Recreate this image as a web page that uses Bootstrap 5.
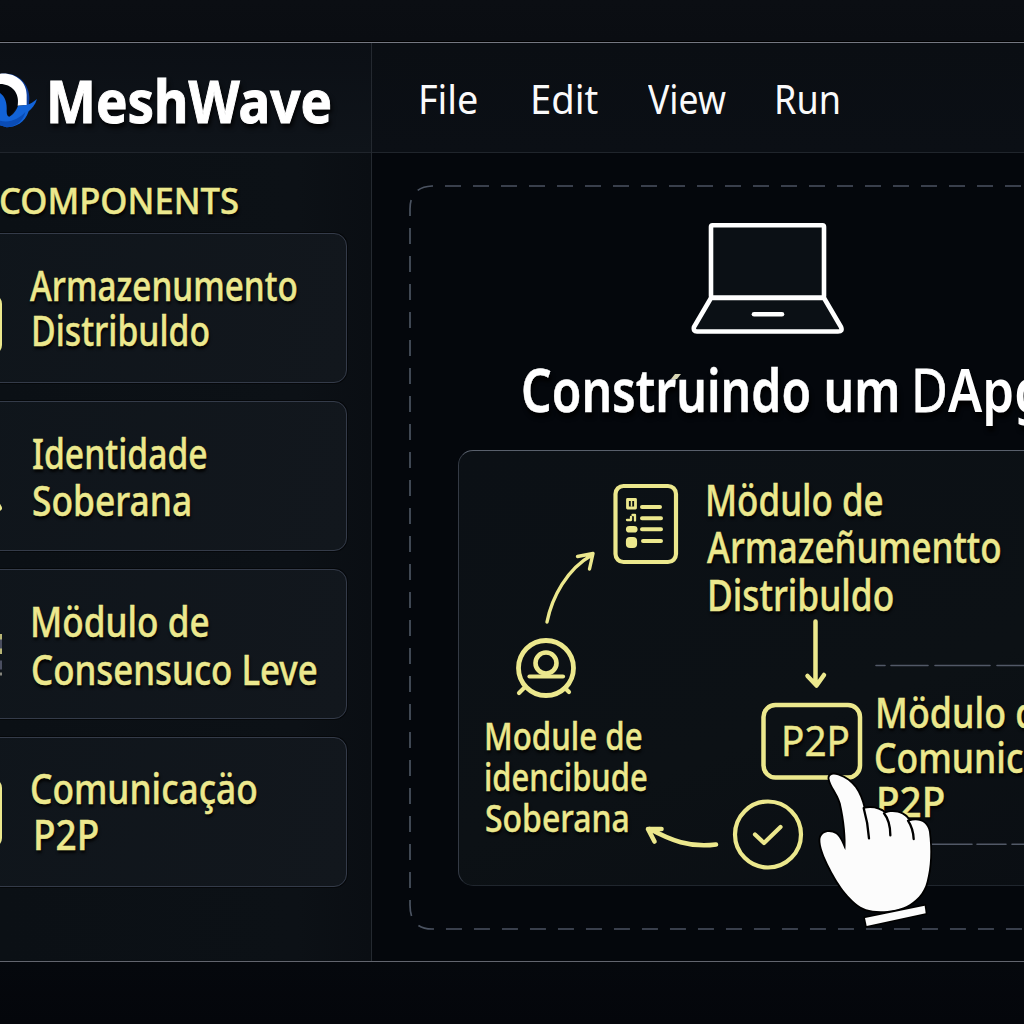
<!DOCTYPE html>
<html lang="pt" data-bs-theme="dark">
<head>
<meta charset="utf-8">
<meta name="viewport" content="width=device-width, initial-scale=1">
<title>MeshWave</title>
<link href="https://cdn.jsdelivr.net/npm/bootstrap@5.3.0/dist/css/bootstrap.min.css" rel="stylesheet">
<script src="https://cdn.jsdelivr.net/npm/bootstrap@5.3.0/dist/js/bootstrap.bundle.min.js"></script>
<style>
:root{--cream:#ece88d;--line:#343b49}
html,body{width:1024px;height:1024px;overflow:hidden}
body{background:linear-gradient(#0b0e13 0,#0a0d12 42px,#05080d 961px,#04060b 100%);font-family:"Noto Sans",sans-serif;font-weight:500;padding-top:42px}
.app-window{height:920px;border-top:1px solid #747780;border-bottom:1px solid #62656e;box-shadow:0 -1px #000;background:#04070c}
.side{width:372px;border-right:1px solid #242930;background:linear-gradient(90deg,#0b1015,#0c1116 80%,#0a0e13)}
.bar{height:110px;border-bottom:1px solid #20252c;background:linear-gradient(#0b0f15,#0f141a)}
.menu-bar{background:linear-gradient(#0a0e13,#0b0f15);padding-left:46px;padding-top:3px}
.fit{display:block;width:max-content;white-space:nowrap;transform:scaleX(var(--sx,.82));transform-origin:0 50%}
.glow{color:var(--cream);text-shadow:1px 3px 3px rgba(0,0,0,.85);-webkit-text-stroke:.45px var(--cream)}
.brand-name{font-size:60px;font-weight:700;line-height:60px;--sx:.882;margin:4px 0 0 7px;color:#fff;text-shadow:2px 4px 6px #000;-webkit-text-stroke:1px #fff}
.menu-bar .menu-item{font-size:40px;font-weight:400;line-height:54px;color:#fafafa;padding:0}
.menu-item:nth-child(1){width:112px;--sx:.945}
.menu-item:nth-child(2){width:118px;--sx:.955}
.menu-item:nth-child(3){width:126px;--sx:.89}
.menu-item:nth-child(4){--sx:.9}
.side-title{font-size:36px;font-weight:500;line-height:48px;margin:24px 0 8px -1px;--sx:.962}
.part{height:150px;width:409px;margin-left:-62px;border:1px solid var(--line);border-radius:13px;background:linear-gradient(100deg,#0f151b,#12171d);box-shadow:0 0 0 1px rgba(0,0,0,.5);padding-top:27px;font-size:42px}
.part svg{width:64px;height:100px;flex:none;margin-left:-1px}
.part .words{margin-left:28px}
#p1{line-height:44.5px;padding-top:2px}#p1 :first-child{font-size:41px;--sx:.812}#p1 :last-child{--sx:.803;margin-left:1px}
#p2{line-height:46.5px;padding-top:1px}#p2 :first-child{--sx:.802;margin-left:2px}#p2 :last-child{--sx:.842;margin-left:2px}
#p3{line-height:47.5px}#p3 :first-child{--sx:.837}#p3 :last-child{--sx:.83;margin-left:1px}
#p4{line-height:46px}#p4 :first-child{--sx:.84}#p4 :last-child{--sx:.88;margin-left:3px}
.work{padding:32px 0 0 37px}
.frame{height:744px;width:640px}
.frame-line{left:0;top:0;width:640px;height:746px}
.laptop{width:156px;height:116px;margin:36px 0 0 281px}
.title-row{font-size:60px;line-height:80px;margin:12px 0 0 112px;height:80px;color:#fff;text-shadow:2px 5px 5px #000}
.title-row .t1{font-weight:600;--sx:.802;width:390px;-webkit-text-stroke:.5px #fff}
.title-row .t2{font-weight:400;--sx:.84;width:37px;-webkit-text-stroke:.8px #fff}
.title-row .t3{font-weight:600;--sx:.85}
.accent-tick{left:262px;top:188px;width:12px;height:8px}
.flow-panel{left:49px;top:265px;width:620px;height:436px;border:1px solid #343a45;border-top-color:#59606c;border-bottom-color:#20262e;border-radius:15px;background:linear-gradient(160deg,#0b1015,#0c1115 60%,#0a0e13)}
.flow-art{left:0;top:0;width:565px;height:437px}
.label-a{left:246px;top:24.5px;font-size:43px;line-height:47.5px}
.label-a :nth-child(1){--sx:.813}.label-a :nth-child(2){--sx:.813;margin-left:2px}.label-a :nth-child(3){--sx:.82;margin-left:2px}
.label-b{left:25px;top:264px;font-size:38.5px;line-height:41px}
.label-b :nth-child(1){--sx:.812}.label-b :nth-child(2){--sx:.803}.label-b :nth-child(3){--sx:.83;margin-left:1px}
.label-c{left:416px;top:239px;font-size:42px;line-height:44.5px}
.label-c :nth-child(1){--sx:.853}.label-c :nth-child(2){--sx:.845;margin-left:-1px}.label-c :nth-child(3){--sx:.92;margin-left:1px}
.label-n{left:322px;top:266px;font-size:42px;line-height:46px;--sx:.92;font-weight:400}
.hand{left:401px;top:575px;width:140px;height:180px}
</style>
</head>
<body>
<div class="app-window d-flex overflow-hidden">
  <aside class="side d-flex flex-column flex-shrink-0 overflow-hidden">
    <div class="bar d-flex align-items-center">
      <svg width="39" height="60" viewBox="0 0 117 180"><path d="M0 18C50 10 88 45 88 92L86 118 76 116Z" fill="#0d3f9e"/><path d="M0 46C40 45 60 75 54 114L28 146H0Z" fill="#04070c"/><path d="M0 17C44 12 80 40 80 80V111L53 113C60 75 35 48 0 48Z" fill="#fff"/><path d="M0 75C15 85 22 105 20 130 20 140 23 146 28 146 40 140 50 125 54 113L80 111C92 108 100 102 111 93 106 110 96 122 86 130 75 165 45 178 20 178L0 172Z" fill="#1263d8"/><path d="M0 158C30 166 58 152 76 132 70 162 42 178 20 178L0 172Z" fill="#0a4cb5"/></svg>
      <div class="fit brand-name">MeshWave</div>
    </div>
    <h2 class="fit glow side-title">COMPONENTS</h2>
    <div class="d-flex flex-column" style="gap:18px">
      <div class="part d-flex">
        <svg viewBox="0 0 64 100"><rect x="8" y="35" width="54" height="57" rx="8" fill="none" stroke="#ece88d" stroke-width="4"/></svg>
        <div class="words glow" id="p1"><span class="fit">Armazenumento</span><span class="fit">Distribuldo</span></div>
      </div>
      <div class="part d-flex">
        <svg viewBox="0 0 64 100"><circle cx="32" cy="45" r="26" fill="none" stroke="#ece88d" stroke-width="4"/><path d="M58 74L61 79" stroke="#ece88d" stroke-width="6" stroke-linecap="round"/></svg>
        <div class="words glow" id="p2"><span class="fit">Identidade</span><span class="fit">Soberana</span></div>
      </div>
      <div class="part d-flex">
        <svg viewBox="0 0 64 100"><path d="M6 40H64M6 54H64" stroke="#b9b676" stroke-width="6"/><path d="M6 47H64M6 68H64" stroke="#4a4e60" stroke-width="9"/><path d="M6 77H64" stroke="#85857d" stroke-width="3"/></svg>
        <div class="words glow" id="p3"><span class="fit">Mödulo de</span><span class="fit">Consensuco Leve</span></div>
      </div>
      <div class="part d-flex">
        <svg viewBox="0 0 64 100"><rect x="8" y="15" width="54" height="66" rx="8" fill="none" stroke="#ece88d" stroke-width="4"/></svg>
        <div class="words glow" id="p4"><span class="fit">Comunicaçäo</span><span class="fit">P2P</span></div>
      </div>
    </div>
  </aside>
  <main class="flex-grow-1 overflow-hidden">
    <nav class="bar menu-bar d-flex align-items-center">
      <a class="fit nav-link menu-item" href="#">File</a>
      <a class="fit nav-link menu-item" href="#">Edit</a>
      <a class="fit nav-link menu-item" href="#">View</a>
      <a class="fit nav-link menu-item" href="#">Run</a>
    </nav>
    <section class="work">
      <div class="frame position-relative d-flex flex-column">
        <svg class="frame-line position-absolute" viewBox="0 0 640 746" fill="none" stroke="#4b5361" stroke-width="1.7"><path d="M640 1H23Q1 2 1 24V720Q1 744 23 744H640" stroke-dasharray="16 12"/></svg>
        <svg class="laptop" viewBox="690 221 156 116" fill="#0b1015" stroke="#fff" stroke-width="4.6" stroke-linejoin="round"><path d="M711 298L694 327Q693 331.500 697 331.500H838Q843 331.500 841 327L824 298Z"/><rect x="711" y="225.300" width="113" height="72.300" rx="1.500"/><path d="M754 314.200H782" stroke-linecap="round"/></svg>
        <h1 class="title-row d-flex"><span class="fit t1">Construindo um</span><span class="fit t2">D</span><span class="fit t3">Apg</span></h1>
        <svg class="accent-tick position-absolute" viewBox="0 0 12 8"><path d="M0 6L4 1H10L6 6Z" fill="#d8d6b4"/></svg>
        <div class="flow-panel position-absolute">
          <svg class="flow-art position-absolute" viewBox="459 451 565 437" fill="none" stroke="#ece88d" stroke-width="4.200" stroke-linecap="round" stroke-linejoin="round">
            <rect x="615.500" y="486" width="60.500" height="76" rx="8"/>
            <path d="M642 507H660M642 518.300H661M642 529.300H661M643 541H661" stroke-width="4"/>
            <rect x="627.500" y="499.500" width="8" height="8.500" stroke-width="2.800"/><path d="M631.500 501.500V506" stroke-width="1.500"/>
            <path d="M627 520H631V517M635 515.500V520.500M632.500 515H635" stroke-width="2.300"/>
            <rect x="628" y="528" width="7.500" height="2.500" rx="1.500"/><rect x="628" y="539" width="7" height="7" rx="2" fill="#ece88d"/>
            <path d="M547 622C552 597 567 569 592 555M577.500 556.500L593 553.500 589.500 569" stroke-width="3.400"/>
            <circle cx="546" cy="668" r="27.500" stroke-width="4.800"/><circle cx="546" cy="663" r="10.500" stroke-width="4.600"/><path d="M529.500 676.500H563"/><path d="M524 688L519 693M565 688L569 692"/>
            <path d="M815.500 621.500V683M807.500 676L816.500 685.500 824 675" stroke-width="4.500"/>
            <rect x="763.500" y="705" width="96.500" height="72.500" rx="12" stroke-width="4.500"/>
            <circle cx="768" cy="834.500" r="33"/><path d="M755 834.500L764 843 780.500 827"/>
            <path d="M716 844.500C690 848 670 840 650 829M661.500 829H648L654.500 841.500" stroke-width="4.600"/>
            <g stroke="#525967" stroke-width="1.600"><path d="M876 665.500H885M891 665.500H928M935 665.500H990M997 665.500H1024"/><path d="M930 844.200H972M977 844.200H1006M1012 844.200H1024"/></g>
          </svg>
          <div class="label-a glow position-absolute"><span class="fit">Mödulo de</span><span class="fit">Armazeñumentto</span><span class="fit">Distribuldo</span></div>
          <div class="label-b glow position-absolute"><span class="fit">Module de</span><span class="fit">idencibude</span><span class="fit">Soberana</span></div>
          <div class="label-c glow position-absolute"><span class="fit">Mödulo de</span><span class="fit">Comunicaçäo</span><span class="fit">P2P</span></div>
          <div class="label-n fit glow position-absolute">P2P</div>
        </div>
        <svg class="hand position-absolute" viewBox="0 0 420 540"><path d="M58 55C58 42 72 41 84 46 130 62 150 95 162 146 185 140 210 146 226 160 250 150 285 158 298 184 325 175 352 185 357 215 364 270 362 320 350 365 342 400 315 425 290 438 255 455 200 458 168 448 125 432 85 375 60 325 42 290 30 260 31 238 33 215 60 210 78 222 92 232 98 255 106 270 109 240 104 180 92 130 84 100 62 80 58 55Z" fill="#fcfcfc" stroke="#000" stroke-width="11" paint-order="stroke"/><path d="M161 144C170 175 175 205 177 235M222 160C238 180 241 200 241 226M294 182C306 200 310 215 311 237" fill="none" stroke="#000" stroke-width="7" stroke-linecap="round"/><path d="M165 474L344 437 347 460 170 498Z" fill="#fcfcfc" stroke="#000" stroke-width="9" paint-order="stroke"/></svg>
      </div>
    </section>
  </main>
</div>
</body>
</html>
